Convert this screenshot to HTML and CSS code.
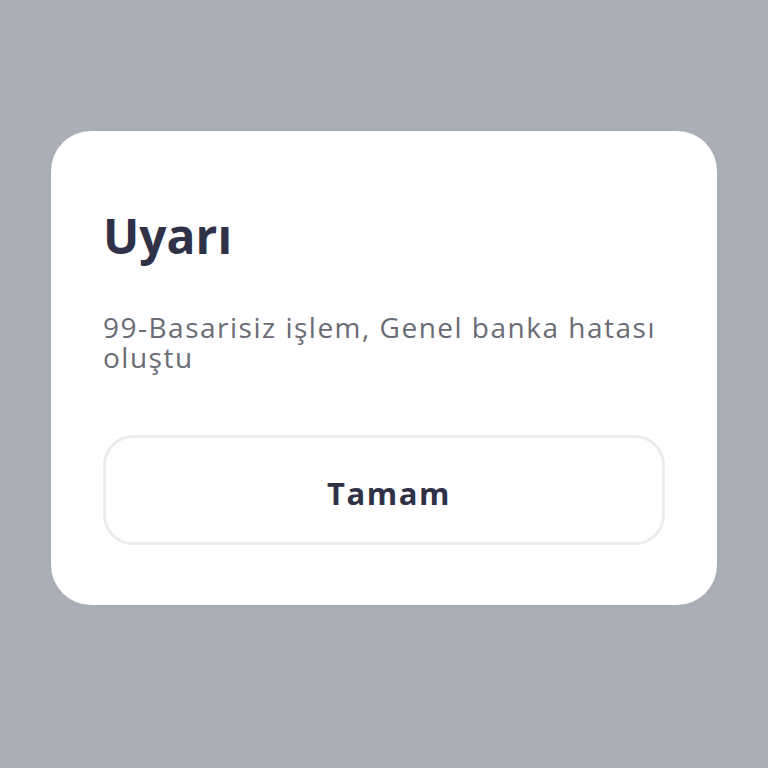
FILE: index.html
```html
<!DOCTYPE html>
<html lang="tr">
<head>
<meta charset="utf-8">
<link rel="stylesheet" href="styles.css">
</head>
<body>
<div class="screen">
  <div class="dialog">
    <h1 class="title">Uyarı</h1>
    <p class="message">99-Basarisiz işlem, Genel banka hatası oluştu</p>
    <button class="ok">Tamam</button>
  </div>
</div>
</body>
</html>
```
FILE: styles.css
```css
html, body {
  margin: 0;
  padding: 0;
}
body {
  background: #aaaeb6;
  font-family: "Open Sans", "Noto Sans", sans-serif;
}
.screen {
  width: 768px;
  height: 768px;
  padding: 131px 51px 0 51px;
  box-sizing: border-box;
}
.dialog {
  background: #ffffff;
  border-radius: 40px;
  padding: 76px 52px 60px 52px;
  display: flex;
  flex-direction: column;
}
.title {
  margin: 0;
  font-size: 48px;
  line-height: 58px;
  font-weight: 700;
  color: #2f3147;
}
.message {
  margin: 47px 0 0 0;
  font-size: 28px;
  line-height: 30px;
  letter-spacing: 1.5px;
  color: #6a6c75;
}
.ok {
  margin-top: 63px;
  height: 110px;
  padding: 5px 0 0 10px;
  background: #ffffff;
  border: 3px solid #ececec;
  border-radius: 30px;
  font-family: inherit;
  font-size: 31px;
  letter-spacing: 1.5px;
  font-weight: 700;
  color: #2f3147;
}
```
